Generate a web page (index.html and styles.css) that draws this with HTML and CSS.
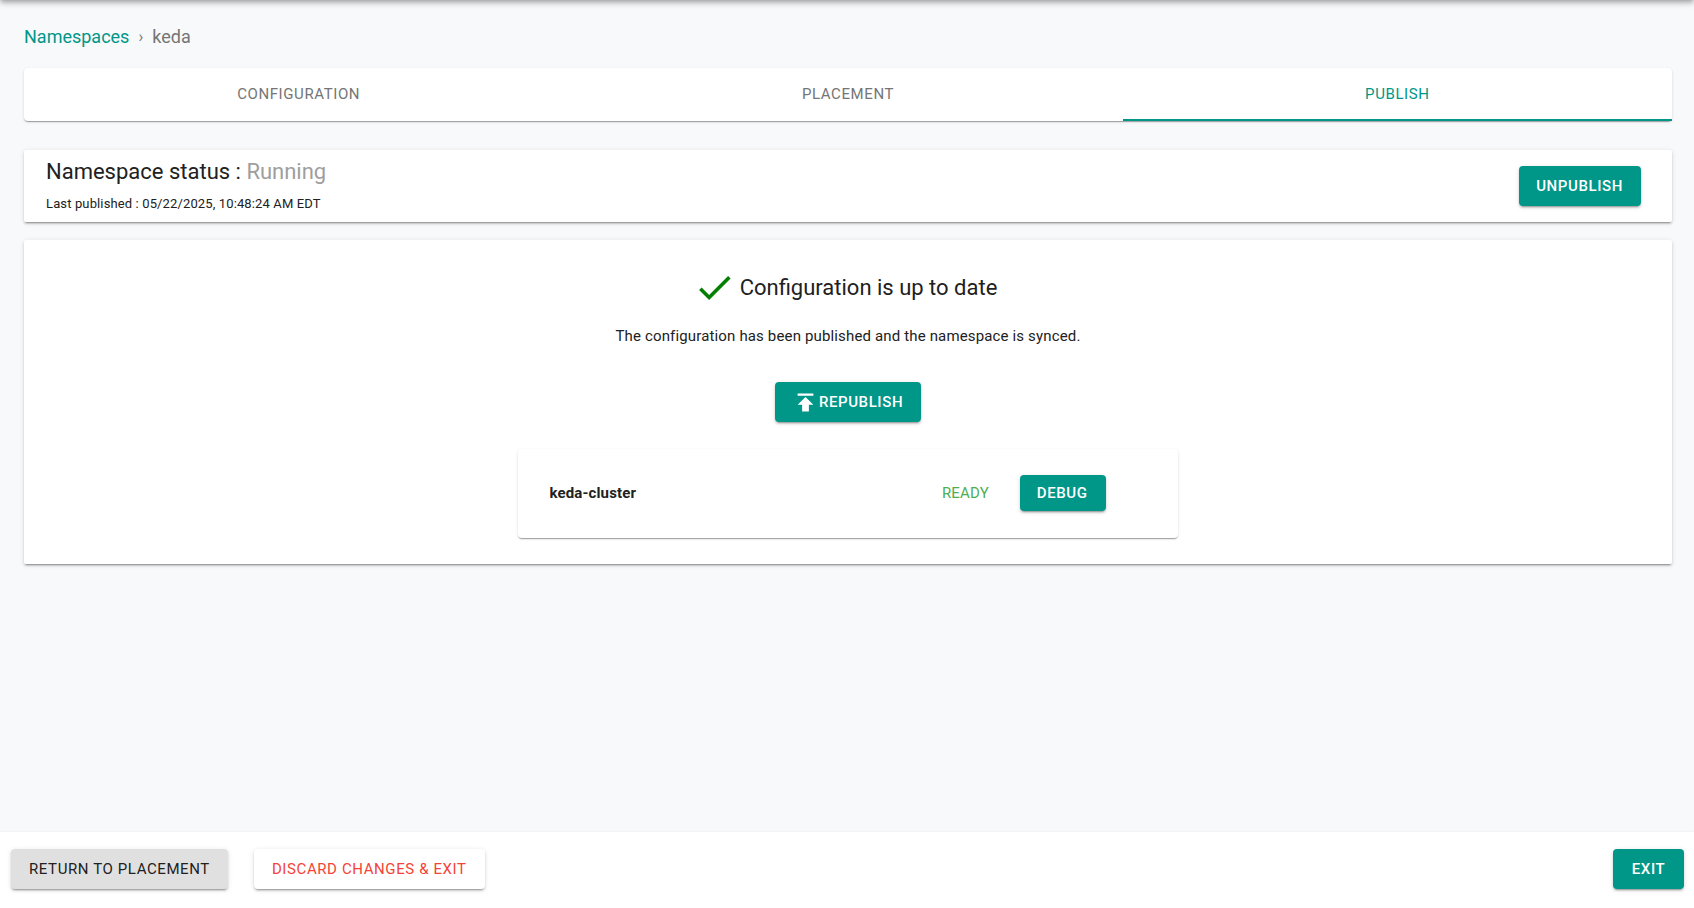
FILE: index.html
```html
<!DOCTYPE html>
<html lang="en">
    <head>
        <title>keda - Namespaces</title>
        <meta charset="utf-8" />
        <meta name="viewport" content="width=device-width, initial-scale=1" />
        <link rel="stylesheet" href="styles.css">
    </head>
    <body>
        <div class="app-bar"></div>
        <main class="content">
            <nav class="breadcrumbs" aria-label="breadcrumb">
                <a href="#">Namespaces</a>
                <span class="separator">›</span>
                <span>keda</span>
            </nav>
            <div class="tabs" role="tablist">
                <button class="tab" role="tab">CONFIGURATION</button>
                <button class="tab" role="tab">PLACEMENT</button>
                <button class="tab selected" role="tab" aria-selected="true">PUBLISH</button>
            </div>
            <section class="card status">
                <div>
                    <h2 class="title">Namespace status : <span class="state">Running</span></h2>
                    <p class="published">Last published : 05/22/2025, 10:48:24 AM EDT</p>
                </div>
                <button class="button primary">UNPUBLISH</button>
            </section>
            <section class="card sync">
                <div class="sync-title">
                    <svg class="check" viewBox="0 0 24 24">
                        <path d="M9 16.2L4.8 12l-1.4 1.4L9 19 21 7l-1.4-1.4L9 16.2z" />
                    </svg>
                    <h2 class="title">Configuration is up to date</h2>
                </div>
                <p class="message">The configuration has been published and the namespace is synced.</p>
                <button class="button primary republish">
                    <svg class="publish-icon" viewBox="0 0 24 24">
                        <path d="M5 4v2h14V4H5zm0 10h4v6h6v-6h4l-7-7-7 7z" />
                    </svg>
                    REPUBLISH
                </button>
                <div class="cluster">
                    <strong class="cluster-name">keda-cluster</strong>
                    <span class="ready">READY</span>
                    <button class="button primary small">DEBUG</button>
                </div>
            </section>
        </main>
        <footer class="footer">
            <button class="button neutral">RETURN TO PLACEMENT</button>
            <button class="button danger">DISCARD CHANGES &amp; EXIT</button>
            <button class="button primary exit">EXIT</button>
        </footer>
    </body>
</html>
```

FILE: styles.css
```css
* {
    box-sizing: border-box;
}

body {
    display: flex;
    flex-direction: column;
    min-height: 100vh;
    margin: 0;
    font-family: Roboto, sans-serif;
    font-size: 15px;
    color: #212121;
    background-color: #f8f9fb;
}

h2,
p {
    margin: 0;
}

button {
    font-family: inherit;
    font-size: 15px;
    border: 0;
    cursor: pointer;
}

/* sits above the window, only its shadow is visible */
.app-bar {
    position: fixed;
    top: -64px;
    left: 0;
    right: 0;
    height: 64px;
    box-shadow: 0 2px 4px -1px rgba(0, 0, 0, 0.2), 0 4px 5px 0 rgba(0, 0, 0, 0.14),
        0 1px 10px 0 rgba(0, 0, 0, 0.12);
}

.content {
    flex: 1;
    padding: 24px 22px 24px 24px;
}

.breadcrumbs {
    display: flex;
    align-items: center;
    gap: 9px;
    height: 24px;
    margin-bottom: 20px;
    font-size: 18px;
    color: #757575;
}

.breadcrumbs a {
    color: #009688;
    text-decoration: none;
}

.separator {
    font-size: 16px;
}

.tabs {
    display: flex;
    height: 53px;
    margin-bottom: 29px;
    border-radius: 4px;
    background-color: #fff;
    box-shadow: 0 2px 1px -1px rgba(0, 0, 0, 0.2), 0 1px 1px 0 rgba(0, 0, 0, 0.14),
        0 1px 3px 0 rgba(0, 0, 0, 0.12);
}

.tab {
    flex: 1;
    padding: 0;
    letter-spacing: 0.04em;
    color: #757575;
    background: none;
    border-bottom: 2px solid transparent;
}

.tab.selected {
    color: #009688;
    border-bottom-color: #009688;
}

.card {
    border-radius: 2px;
    background-color: #fff;
    box-shadow: 0 3px 1px -2px rgba(0, 0, 0, 0.2), 0 2px 2px 0 rgba(0, 0, 0, 0.14),
        0 1px 5px 0 rgba(0, 0, 0, 0.12);
}

.title {
    font-size: 22px;
    font-weight: 400;
    line-height: 30px;
}

.status {
    display: flex;
    justify-content: space-between;
    align-items: center;
    min-height: 72px;
    margin-bottom: 18px;
    padding: 0 31px 0 22px;
}

.state {
    color: #9e9e9e;
}

.published {
    margin-top: 6px;
    font-size: 13px;
    line-height: 22px;
    letter-spacing: 0.01em;
}

.button {
    height: 40px;
    padding: 0 18px 0 17px;
    border-radius: 4px;
    font-weight: 500;
    letter-spacing: 0.04em;
    white-space: nowrap;
    box-shadow: 0 3px 1px -2px rgba(0, 0, 0, 0.2), 0 2px 2px 0 rgba(0, 0, 0, 0.14),
        0 1px 5px 0 rgba(0, 0, 0, 0.12);
}

.primary {
    color: #fff;
    background-color: #009688;
}

.small {
    height: 36px;
}

.sync {
    display: flex;
    flex-direction: column;
    align-items: center;
    padding: 26px 0;
}

.sync-title {
    display: flex;
    align-items: center;
    gap: 4px;
    padding-right: 6px;
}

.check {
    width: 43px;
    height: 43px;
    fill: #008000;
}

.message {
    margin: 15px 0 34px;
    line-height: 24px;
    letter-spacing: 0.01em;
}

.republish {
    display: flex;
    align-items: center;
}

.publish-icon {
    width: 27px;
    height: 27px;
    fill: #fff;
}

.cluster {
    display: flex;
    align-items: center;
    width: 40%;
    min-height: 89px;
    margin-top: 27px;
    padding: 0 72px 2px 31px;
    border-radius: 4px;
    letter-spacing: 0.01em;
    box-shadow: 0 2px 1px -1px rgba(0, 0, 0, 0.2), 0 1px 1px 0 rgba(0, 0, 0, 0.14),
        0 1px 3px 0 rgba(0, 0, 0, 0.12);
}

.cluster-name {
    flex: 1;
    font-weight: 700;
}

.ready {
    margin-right: 31px;
    color: #4caf50;
}

.footer {
    display: flex;
    align-items: center;
    gap: 26px;
    height: 76px;
    padding: 0 10px 2px 11px;
    background-color: #fff;
    box-shadow: 0 0 2px rgba(0, 0, 0, 0.08);
}

.footer .button {
    padding: 0 18px;
}

.neutral {
    font-weight: 400;
    color: #212121;
    background-color: #e0e0e0;
}

.danger {
    font-weight: 400;
    color: #f44336;
    background-color: #fff;
}

.exit {
    min-width: 71px;
    margin-left: auto;
}
```
